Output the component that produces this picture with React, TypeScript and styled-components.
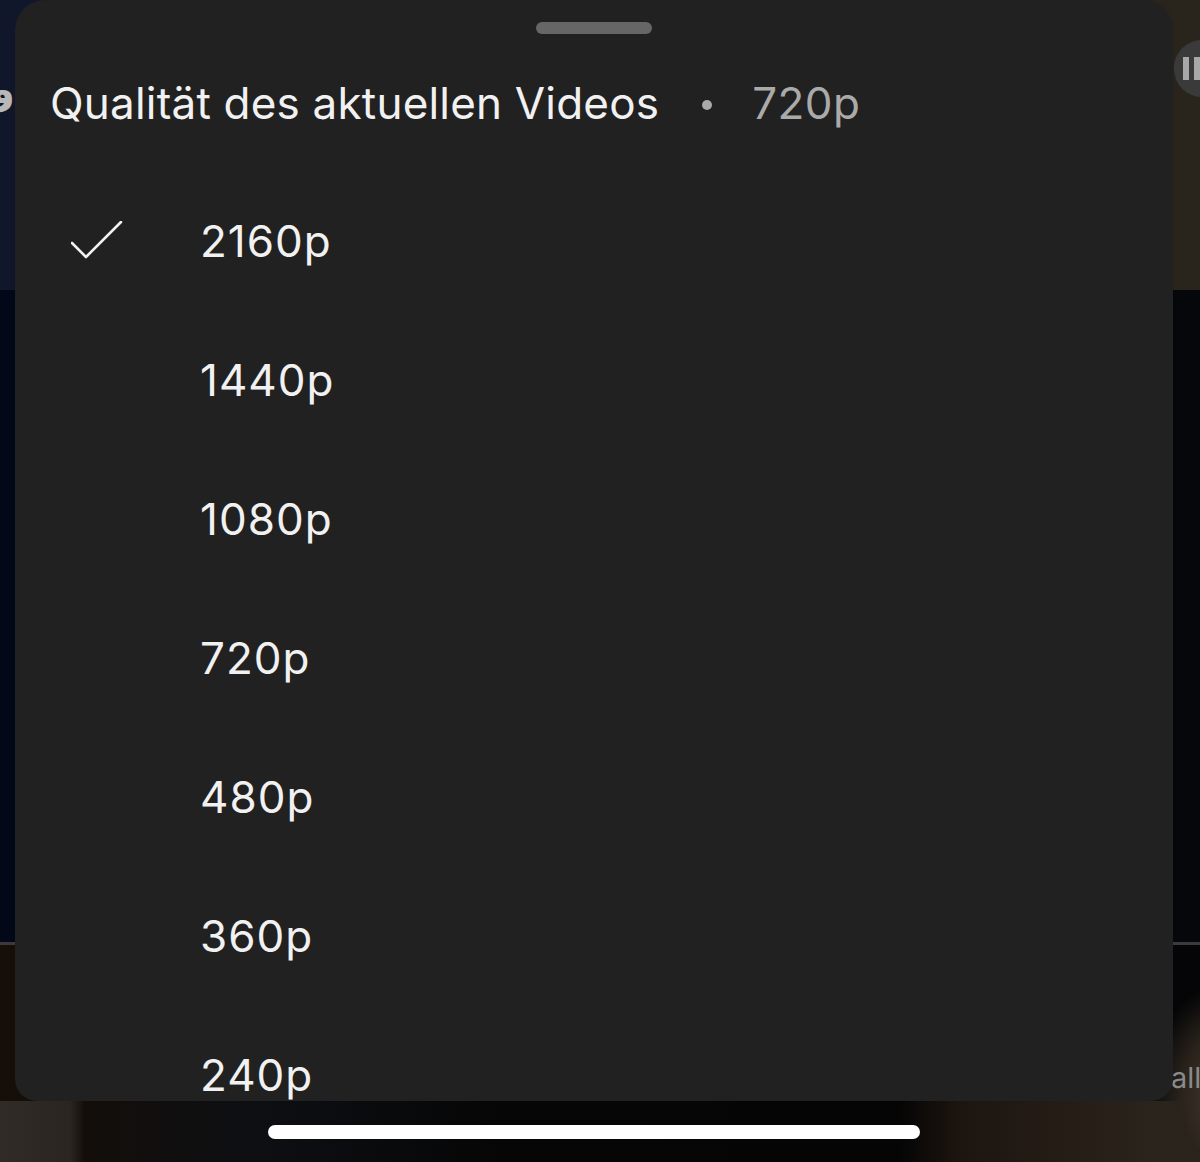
import React from "react";
import styled, { createGlobalStyle } from "styled-components";

const Global = createGlobalStyle`
  html, body { margin: 0; padding: 0; background: #050505; }
  body { font-family: "Inter", "Roboto", sans-serif; -webkit-font-smoothing: antialiased; }
`;

const Stage = styled.div`
  position: relative;
  width: 1200px;
  height: 1162px;
  overflow: hidden;
  background:
    radial-gradient(ellipse 90px 120px at 1235px 1100px, #4a4034 0%, #2a231c 60%, rgba(20,15,10,0) 100%),
    linear-gradient(to bottom, transparent 942px, #3a3a3c 942px, #3a3a3c 945px, transparent 945px),
    linear-gradient(to right, #10172b 0, #0d1322 600px, #2a251c 1200px) 0 0 / 100% 290px no-repeat,
    linear-gradient(to right, #030818 0, #04070f 600px, #06070a 1200px) 0 290px / 100% 655px no-repeat,
    linear-gradient(to right, #150e09 0, #110c09 300px, #060606 700px, #050507 1200px) 0 945px / 100% 156px no-repeat,
    linear-gradient(to right, #302b26 0, #2a2520 70px, #130e0a 85px, #0d0f13 260px, #060606 500px, #050505 900px, #1d150f 960px, #2e271f 1200px) 0 1101px / 100% 61px no-repeat,
    #050505;
`;

const Glyph = styled.span`
  position: absolute;
  left: -10px;
  top: 66px;
  font-family: "DejaVu Sans", sans-serif;
  font-weight: 700;
  font-size: 40px;
  color: #b8b8b8;
`;

const PausePill = styled.div`
  position: absolute;
  left: 1174px;
  top: 40px;
  width: 60px;
  height: 57px;
  border-radius: 28px;
  background: #3a3a3b;
  display: flex;
  align-items: center;
  gap: 5px;
  padding-left: 9px;
  box-sizing: border-box;
`;

const PauseBar = styled.span`
  width: 6px;
  height: 23px;
  background: #a8a8a8;
`;

const SideLabel = styled.span`
  position: absolute;
  left: 1171px;
  top: 1060px;
  font-family: "Inter", sans-serif;
  font-size: 29px;
  color: #8a8a8a;
`;

const Sheet = styled.div`
  position: absolute;
  left: 15px;
  top: 0;
  width: 1158px;
  height: 1101px;
  background: #212121;
  border-radius: 30px 30px 22px 22px;
  overflow: hidden;
  display: flex;
  flex-direction: column;
  align-items: stretch;
`;

const Handle = styled.div`
  align-self: center;
  margin-top: 22px;
  width: 116px;
  height: 12px;
  border-radius: 6px;
  background: #666666;
  flex-shrink: 0;
`;

const Header = styled.div`
  height: 137px;
  flex-shrink: 0;
  display: flex;
  align-items: center;
  padding-left: 35px;
  font-size: 44px;
  line-height: 1;
`;

const Title = styled.span`
  color: #f1f1f1;
  letter-spacing: 0.2px;
`;

const Dot = styled.span`
  width: 10px;
  height: 10px;
  border-radius: 50%;
  background: #aaaaaa;
  margin: 4px 40px 0 43px;
`;

const Current = styled.span`
  color: #aaaaaa;
  letter-spacing: 0.4px;
`;

const Row = styled.div`
  height: 139px;
  flex-shrink: 0;
  display: flex;
  align-items: center;
  padding-left: 56px;
`;

const CheckSlot = styled.div`
  width: 129px;
  height: 40px;
  display: flex;
  align-items: center;
`;

const Label = styled.span`
  font-size: 44px;
  line-height: 1;
  color: #f1f1f1;
  letter-spacing: 1px;
`;

const HomeIndicator = styled.div`
  position: absolute;
  left: 268px;
  top: 1125px;
  width: 652px;
  height: 14px;
  border-radius: 7px;
  background: #ffffff;
`;

const Check = () => (
  <svg width="52" height="40" viewBox="0 0 52 40" fill="none">
    <path d="M1 22 L15 36 L50 1" stroke="#f1f1f1" strokeWidth="2.6" strokeLinecap="round" strokeLinejoin="round" />
  </svg>
);

const qualities = ["2160p", "1440p", "1080p", "720p", "480p", "360p", "240p"];

export default function App() {
  return (
    <>
      <Global />
      <Stage>
        <Glyph>و</Glyph>
        <PausePill>
          <PauseBar />
          <PauseBar />
        </PausePill>
        <SideLabel>all</SideLabel>
        <Sheet>
          <Handle />
          <Header>
            <Title>Qualität des aktuellen Videos</Title>
            <Dot />
            <Current>720p</Current>
          </Header>
          {qualities.map((q, i) => (
            <Row key={q}>
              <CheckSlot>{i === 0 && <Check />}</CheckSlot>
              <Label>{q}</Label>
            </Row>
          ))}
        </Sheet>
        <HomeIndicator />
      </Stage>
    </>
  );
}
